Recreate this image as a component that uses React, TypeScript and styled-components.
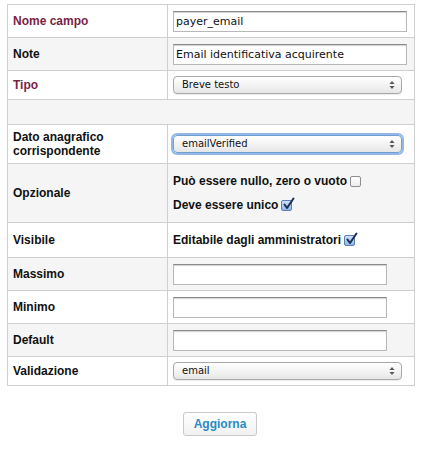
import React from "react";
import styled, { createGlobalStyle, css } from "styled-components";

const Global = createGlobalStyle`
  html, body { margin: 0; padding: 0; background: #fff; }
  body { font-family: "Liberation Sans", Arial, sans-serif; font-size: 12px; color: #222; }
`;

const Page = styled.div`
  padding: 4px 6px 0 7px;
  width: 421px;
  box-sizing: border-box;
`;

const Table = styled.table`
  border-collapse: collapse;
  width: 408px;
  table-layout: fixed;
`;

const Row = styled.tr<{ $alt?: boolean; $h: number }>`
  background: ${(p) => (p.$alt ? "#f5f5f5" : "#fff")};
  height: ${(p) => p.$h}px;
`;

const Label = styled.th<{ $accent?: boolean }>`
  width: 160px;
  box-sizing: border-box;
  border: 1px solid #cfcfcf;
  padding: 0 5px;
  text-align: left;
  vertical-align: middle;
  font-weight: bold;
  font-size: 12px;
  line-height: 14px;
  color: ${(p) => (p.$accent ? "#7b1f45" : "#111")};
`;

const Cell = styled.td`
  border: 1px solid #cfcfcf;
  padding: 0 5px;
  vertical-align: middle;
`;

const TextInput = styled.input<{ $w: number }>`
  display: block;
  box-sizing: border-box;
  width: ${(p) => p.$w}px;
  height: 21px;
  margin: 0;
  padding: 0 2px;
  border: 1px solid #b8b8b8;
  border-top-color: #8a8a8a;
  box-shadow: inset 0 1px 1px rgba(0, 0, 0, 0.18);
  background: #fff;
  font-family: "DejaVu Sans", Verdana, sans-serif;
  font-size: 11px;
  color: #111;
  outline: none;
`;

const SelectWrap = styled.div`
  position: relative;
  width: 229px;
  height: 18px;
`;

const Select = styled.select<{ $focus?: boolean }>`
  appearance: none;
  -webkit-appearance: none;
  display: block;
  box-sizing: border-box;
  width: 100%;
  height: 18px;
  margin: 0;
  padding: 0 18px 0 8px;
  border: 1px solid #a9a9a9;
  border-radius: 4px;
  background: linear-gradient(#ffffff, #f1f1f1 60%, #e6e6e6);
  box-shadow: 0 1px 1px rgba(0, 0, 0, 0.08);
  font-family: "DejaVu Sans", Verdana, sans-serif;
  font-size: 10px;
  line-height: 16px;
  color: #111;
  outline: none;
  ${(p) =>
    p.$focus &&
    css`
      border-color: #6f9fd3;
      box-shadow: 0 0 0 2px rgba(110, 160, 220, 0.75);
    `}
`;

const Arrows = styled.span`
  position: absolute;
  right: 7px;
  top: 5px;
  width: 6px;
  height: 8px;
  pointer-events: none;
  display: flex;
`;

const Options = styled.div`
  display: flex;
  flex-direction: column;
  gap: 10px;
`;

const CheckLine = styled.label`
  display: flex;
  align-items: center;
  gap: 3px;
  font-weight: bold;
  font-size: 12px;
  line-height: 14px;
  color: #111;
`;

const Box = styled.span<{ $on?: boolean }>`
  display: inline-flex;
  position: relative;
  box-sizing: border-box;
  width: 11px;
  height: 11px;
  border-radius: 2px;
  border: 1px solid ${(p) => (p.$on ? "#5a7fb0" : "#8e8e8e")};
  background: ${(p) => (p.$on ? "linear-gradient(#cfe2f7, #8fb6e6)" : "linear-gradient(#fff, #ececec)")};
  margin-top: 1px;
`;

const Tick = styled.svg`
  position: absolute;
  left: 0px;
  top: -4px;
  width: 13px;
  height: 13px;
`;

const Footer = styled.div`
  padding: 26px 0 0 176px;
`;

const Button = styled.button`
  box-sizing: border-box;
  width: 74px;
  height: 24px;
  border: 1px solid #c9c9c9;
  border-radius: 3px;
  background: linear-gradient(#ffffff, #f1f1f1);
  color: #2a8bc6;
  font-family: "Liberation Sans", Arial, sans-serif;
  font-weight: bold;
  font-size: 12px;
  padding: 0;
  cursor: pointer;
`;

function ArrowIcon() {
  return (
    <Arrows>
      <svg width="6" height="8" viewBox="0 0 6 8">
        <path d="M3 0 L5.5 3 H0.5 Z" fill="#555" />
        <path d="M3 8 L5.5 5 H0.5 Z" fill="#555" />
      </svg>
    </Arrows>
  );
}

function Dropdown({ value, focus }: { value: string; focus?: boolean }) {
  return (
    <SelectWrap>
      <Select $focus={focus} defaultValue={value}>
        <option value={value}>{value}</option>
      </Select>
      <ArrowIcon />
    </SelectWrap>
  );
}

function Checkbox({ on }: { on?: boolean }) {
  return (
    <Box $on={on}>
      {on && (
        <Tick viewBox="0 0 13 13">
          <path d="M2.5 7.5 L5 11 L11.5 1.5" fill="none" stroke="#1d2f55" strokeWidth="2" strokeLinecap="round" strokeLinejoin="round" />
        </Tick>
      )}
    </Box>
  );
}

export default function App() {
  return (
    <Page>
      <Global />
      <Table>
        <tbody>
          <Row $h={33}>
            <Label $accent>Nome campo</Label>
            <Cell>
              <TextInput $w={234} defaultValue="payer_email" />
            </Cell>
          </Row>
          <Row $alt $h={33}>
            <Label>Note</Label>
            <Cell>
              <TextInput $w={234} defaultValue="Email identificativa acquirente" />
            </Cell>
          </Row>
          <Row $h={29}>
            <Label $accent>Tipo</Label>
            <Cell>
              <Dropdown value="Breve testo" />
            </Cell>
          </Row>
          <Row $alt $h={25}>
            <Cell colSpan={2} />
          </Row>
          <Row $h={39}>
            <Label>
              Dato anagrafico
              <br />
              corrispondente
            </Label>
            <Cell>
              <Dropdown value="emailVerified" focus />
            </Cell>
          </Row>
          <Row $alt $h={59}>
            <Label>Opzionale</Label>
            <Cell>
              <Options>
                <CheckLine>
                  Può essere nullo, zero o vuoto <Checkbox />
                </CheckLine>
                <CheckLine>
                  Deve essere unico <Checkbox on />
                </CheckLine>
              </Options>
            </Cell>
          </Row>
          <Row $h={35}>
            <Label>Visibile</Label>
            <Cell>
              <CheckLine>
                Editabile dagli amministratori <Checkbox on />
              </CheckLine>
            </Cell>
          </Row>
          <Row $alt $h={33}>
            <Label>Massimo</Label>
            <Cell>
              <TextInput $w={214} />
            </Cell>
          </Row>
          <Row $h={33}>
            <Label>Minimo</Label>
            <Cell>
              <TextInput $w={214} />
            </Cell>
          </Row>
          <Row $alt $h={33}>
            <Label>Default</Label>
            <Cell>
              <TextInput $w={214} />
            </Cell>
          </Row>
          <Row $h={29}>
            <Label>Validazione</Label>
            <Cell>
              <Dropdown value="email" />
            </Cell>
          </Row>
        </tbody>
      </Table>
      <Footer>
        <Button type="button">Aggiorna</Button>
      </Footer>
    </Page>
  );
}
